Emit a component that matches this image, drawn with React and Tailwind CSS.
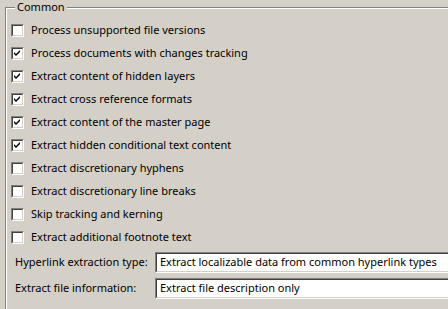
const items = [
  ["Process unsupported file versions", false],
  ["Process documents with changes tracking", true],
  ["Extract content of hidden layers", true],
  ["Extract cross reference formats", true],
  ["Extract content of the master page", true],
  ["Extract hidden conditional text content", true],
  ["Extract discretionary hyphens", false],
  ["Extract discretionary line breaks", false],
  ["Skip tracking and kerning", false],
  ["Extract additional footnote text", false],
];

function Check({ checked }) {
  return (
    <div className="w-[13px] h-[13px] border border-t-[#808080] border-l-[#808080] border-b-white border-r-white shrink-0">
      <div className="w-full h-full border border-t-[#404040] border-l-[#404040] border-b-[#d4d0c8] border-r-[#d4d0c8] bg-white">
        {checked && (
          <svg width="9" height="9" viewBox="0 0 9 9" className="block">
            <path d="M1 3 L1 5 L3 7 L7 3 L7 1 L3 5 Z" fill="#000" />
          </svg>
        )}
      </div>
    </div>
  );
}

function Field({ label, value }) {
  return (
    <div className="flex items-center h-[21px]">
      <div className="w-[144px] pl-[4px] shrink-0 whitespace-nowrap">{label}</div>
      <div className="flex-1 h-[21px] border border-t-[#808080] border-l-[#808080] border-b-white border-r-white">
        <div className="h-full border border-t-[#404040] border-l-[#404040] border-b-[#d4d0c8] border-r-[#d4d0c8] bg-white flex items-center pl-[3px] whitespace-nowrap">
          {value}
        </div>
      </div>
    </div>
  );
}

export default function App() {
  return (
    <div
      className="w-[448px] h-[309px] bg-[#d4d0c8] overflow-hidden text-[11px] text-black"
      style={{ fontFamily: '"Noto Sans", sans-serif' }}
    >
      <div className="pl-[5px] pt-[7px]">
        <div className="relative w-[470px] border-l border-t border-[#808080]">
          <div className="absolute left-[9px] -top-[9px] bg-[#d4d0c8] px-[2px] leading-[16px]">Common</div>
          <div className="border-l border-t border-white pl-[4px] pt-[10px] h-[320px]">
            {items.map(([t, c]) => (
              <div key={t} className="flex items-center h-[23px] gap-[7px] whitespace-nowrap">
                <Check checked={c} />
                <span>{t}</span>
              </div>
            ))}
            <div className="mt-[3px] flex flex-col gap-[5px]">
              <Field label="Hyperlink extraction type:" value="Extract localizable data from common hyperlink types" />
              <Field label="Extract file information:" value="Extract file description only" />
            </div>
          </div>
        </div>
      </div>
    </div>
  );
}
